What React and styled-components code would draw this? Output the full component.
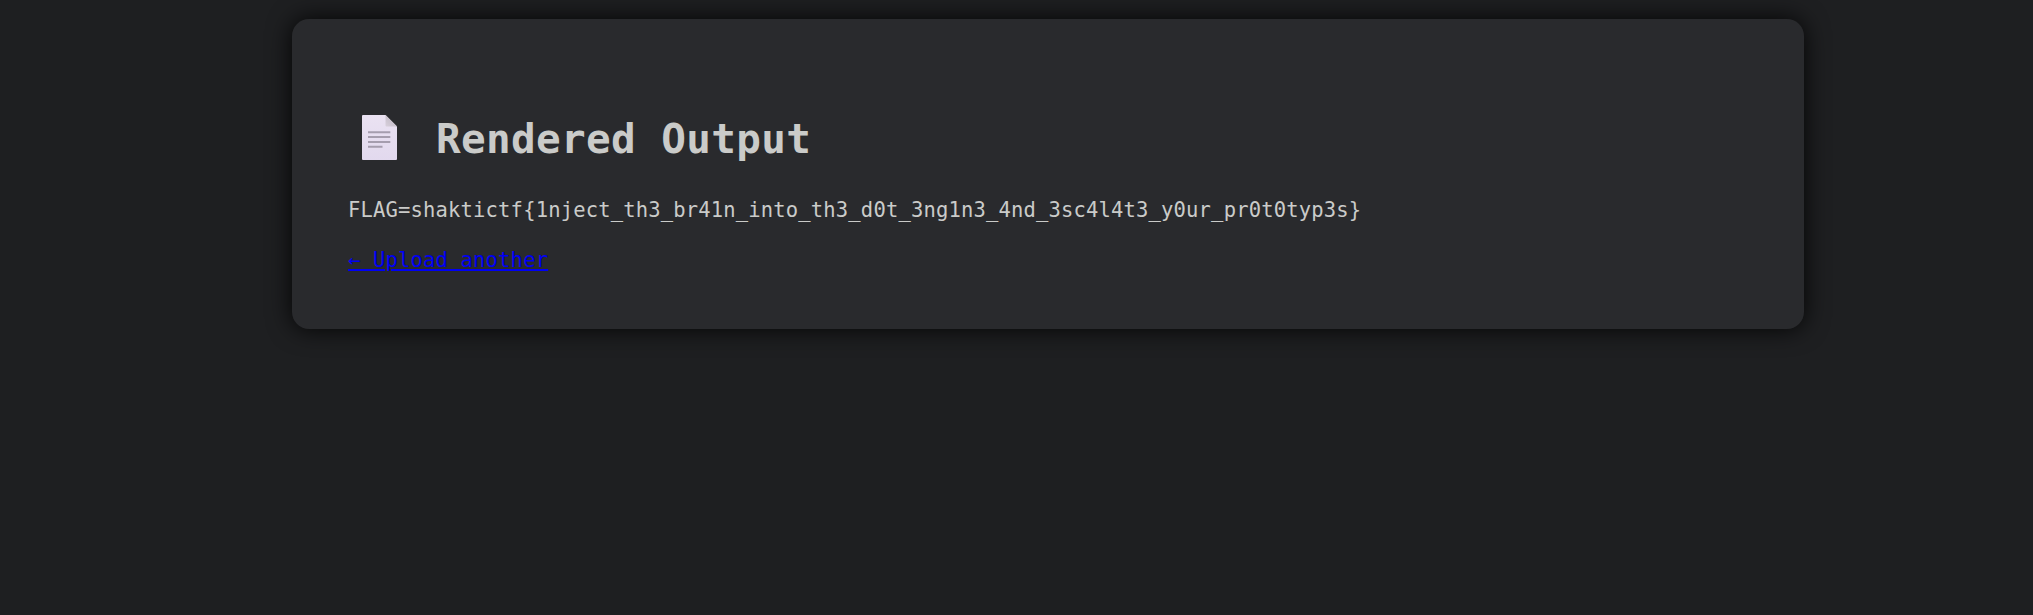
import React from "react";
import styled, { createGlobalStyle } from "styled-components";

const GlobalStyle = createGlobalStyle`
  body {
    margin: 0;
    background: #1e1f21;
  }
`;

const Page = styled.main`
  box-sizing: border-box;
  min-height: 615px;
  padding: 19px 229px 0 292px;
  color: #cacbc9;
  font-family: Consolas, "DejaVu Sans Mono", monospace;
  font-size: 20.5px;
  line-height: 26px;
  letter-spacing: 0.167px;
`;

const Card = styled.section`
  box-sizing: border-box;
  height: 310px;
  padding: 92px 56px 0;
  border-radius: 17px;
  background: #292a2d;
  box-shadow: 0 0 25px rgba(0, 0, 0, 0.9);
`;

const Title = styled.h1`
  display: flex;
  align-items: flex-start;
  margin: 0;
  height: 54px;
  font-size: 41px;
  line-height: 57px;
  letter-spacing: 0.33px;
`;

const DocumentIcon = styled.svg`
  flex: none;
  width: 35px;
  height: 45px;
  margin: 4px 39px 0 14px;
`;

const Output = styled.p`
  margin: 32px 0 24px;
  white-space: nowrap;
`;

const BackLink = styled.a`
  display: inline-block;
  color: #0000f5;
  text-decoration: underline;
  text-decoration-thickness: 2px;
  text-underline-offset: 2px;
`;

export default function App() {
  return (
    <>
      <GlobalStyle />
      <Page>
        <Card>
          <Title>
            <DocumentIcon viewBox="0 0 35 45" aria-hidden="true">
              <defs>
                <linearGradient id="paper" x1="0" y1="0" x2="0" y2="1">
                  <stop offset="0" stopColor="#eae2f2" />
                  <stop offset="1" stopColor="#e2d9ee" />
                </linearGradient>
                <linearGradient id="fold" x1="0" y1="1" x2="1" y2="0">
                  <stop offset="0" stopColor="#d8d0dc" />
                  <stop offset="1" stopColor="#b9b2bd" />
                </linearGradient>
              </defs>
              <path d="M1 0H23.5L35 11.5V44a1 1 0 0 1-1 1H1a1 1 0 0 1-1-1V1a1 1 0 0 1 1-1Z" fill="url(#paper)" />
              <path d="M23.5 0L35 11.5H24.5a1 1 0 0 1-1-1Z" fill="url(#fold)" />
              <path d="M6 17.3H28.3M6 22.1H28.3M6 27.1H28.3M6 31.8H20.5" stroke="#a59dae" strokeWidth="2" />
            </DocumentIcon>
            Rendered Output
          </Title>
          <Output>
            {"FLAG=shaktictf{1nject_th3_br41n_into_th3_d0t_3ng1n3_4nd_3sc4l4t3_y0ur_pr0t0typ3s}"}
          </Output>
          <BackLink href="#">← Upload another</BackLink>
        </Card>
      </Page>
    </>
  );
}
